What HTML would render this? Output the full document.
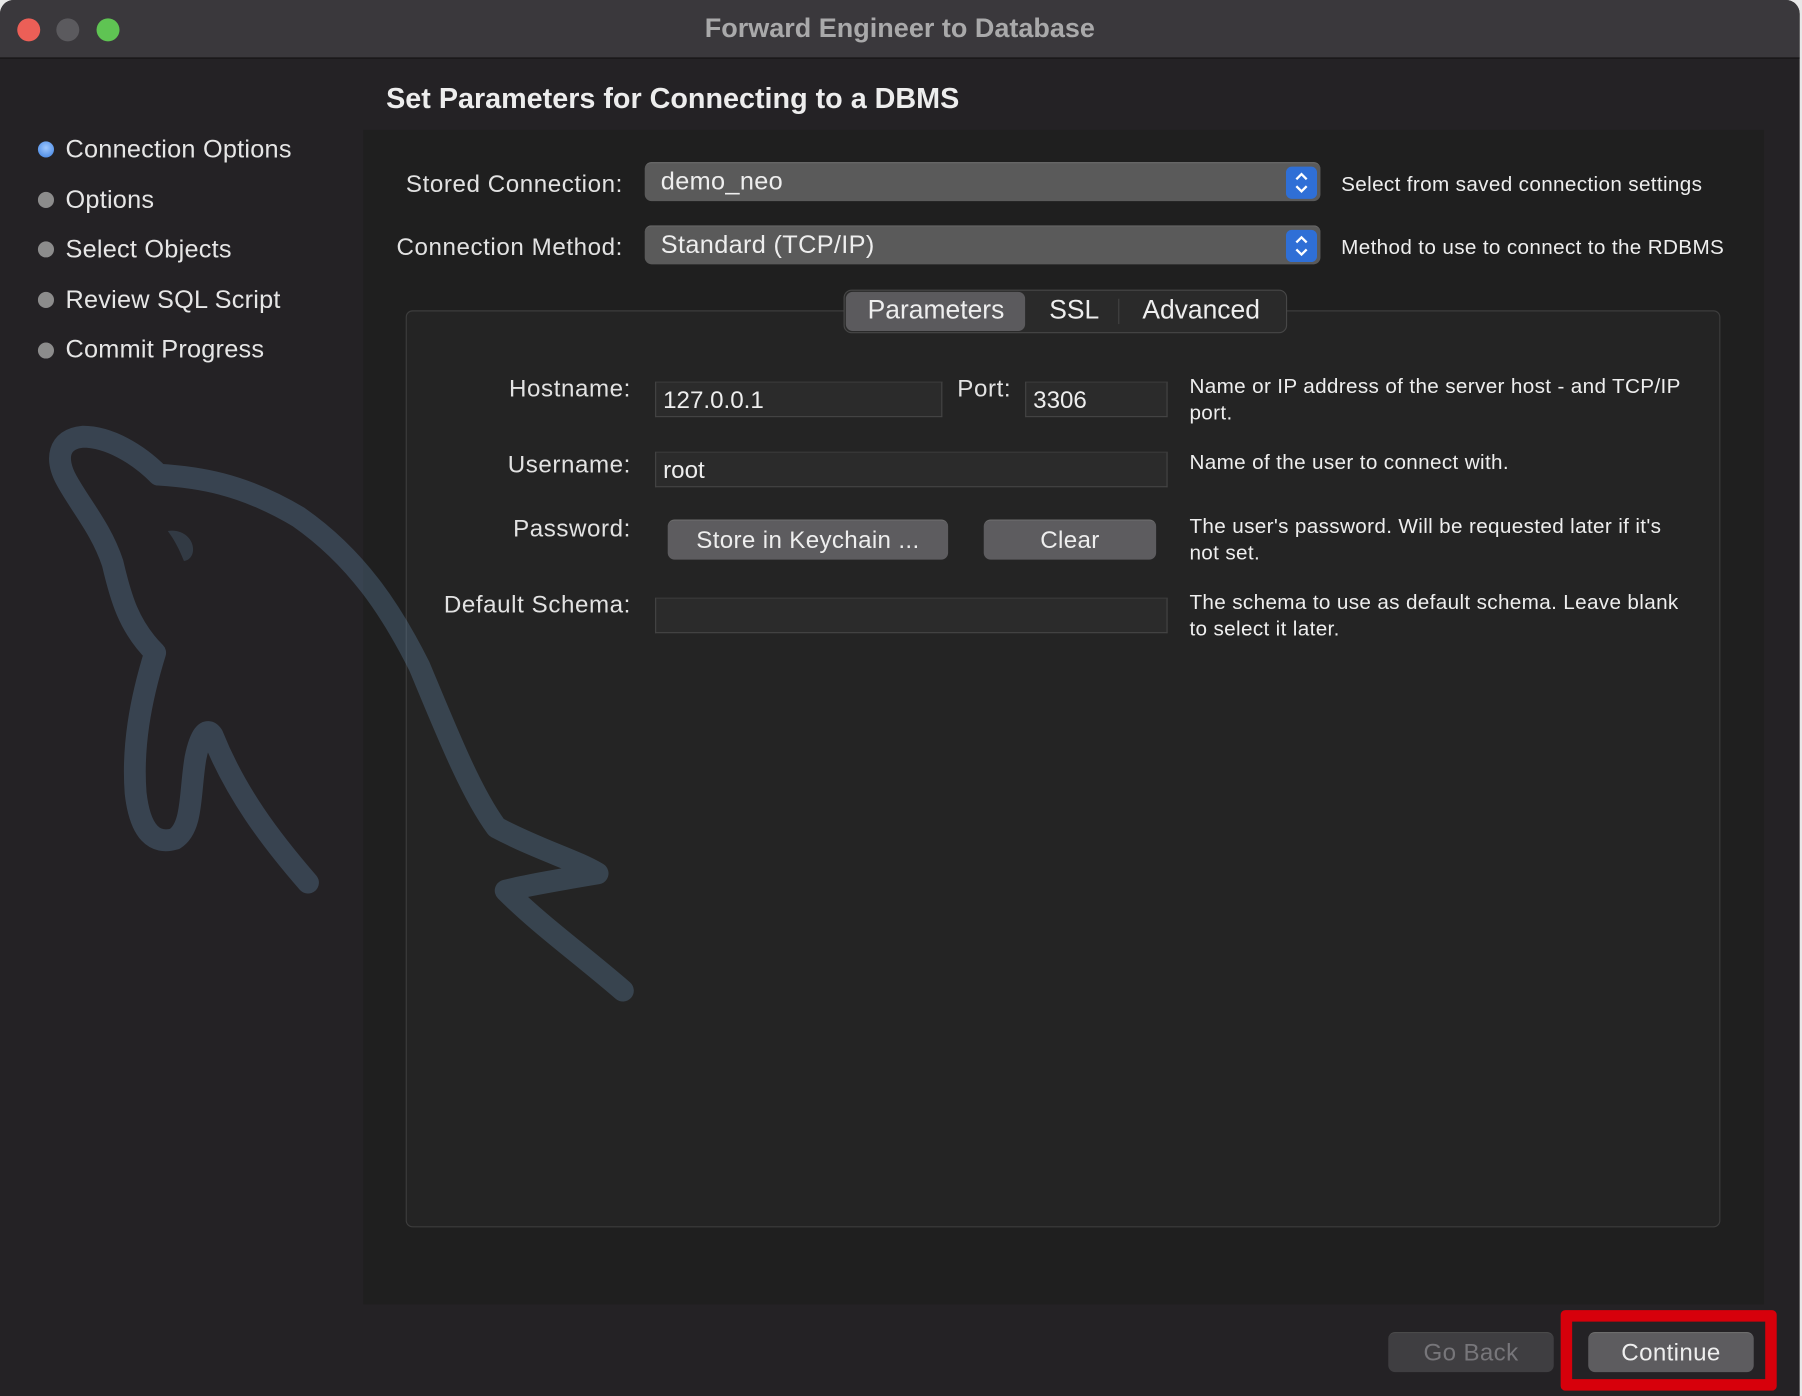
<!DOCTYPE html>
<html><head><meta charset="utf-8"><style>
html,body{margin:0;padding:0;background:#e8e8e8;overflow:hidden}
body{width:1802px;height:1396px}
#w{position:absolute;left:0;top:0;width:1568px;height:1215px;transform:scale(1.14923);transform-origin:0 0;font-family:"Liberation Sans",sans-serif}
.win{position:absolute;left:0;top:0;width:1566px;height:1215px;background:#242225;border-radius:12px 12px 0 0;overflow:hidden}
.title{position:absolute;left:0;top:0;width:100%;height:50px;background:#3a383c;border-bottom:1px solid #111}
.tl{position:absolute;top:16px;width:20px;height:20px;border-radius:50%}
.abs{position:absolute;white-space:nowrap}
.lbl{color:#e2e2e2;font-size:21px;letter-spacing:0.5px}
.side{color:#e6e6e6;font-size:22px;letter-spacing:0.2px}
.dot{position:absolute;width:14px;height:14px;border-radius:50%;background:#8c8c8c}
.help{color:#eee;font-size:18px;line-height:23px;letter-spacing:0.3px}
.sel{position:absolute;height:34px;background:#5a5a5a;border-radius:6px;color:#eee;font-size:22px;line-height:32px;padding-left:14px;box-sizing:border-box;border-top:1px solid #6a6a6a;letter-spacing:0.3px}
.step{position:absolute;right:3px;top:3px;width:27px;height:28px;background:#2f6fd6;border-radius:5px}
.inp{position:absolute;height:31px;background:#2b2b2b;border:1px solid #444;border-top-color:#3a3a3a;box-sizing:border-box;color:#eee;font-size:21px;line-height:32px;padding-left:6px}
.btn{position:absolute;height:35px;background:#5d5c5f;border-radius:6px;color:#eee;font-size:21px;text-align:center;line-height:35px;border-top:1px solid #6d6d6d;box-sizing:border-box;letter-spacing:0.3px}
</style></head><body><div id="w"><div class="win">
<div class="title">
<div class="tl" style="left:15px;background:#ec5f57"></div>
<div class="tl" style="left:49px;background:#5b5a5e"></div>
<div class="tl" style="left:84px;background:#5fc453"></div>
<div class="abs" style="left:0;width:1566px;text-align:center;top:11px;color:#a9a9aa;font-size:23.5px;font-weight:bold">Forward Engineer to Database</div>
</div>
<div class="abs" style="left:336px;top:72px;color:#ededed;font-size:25px;font-weight:bold">Set Parameters for Connecting to a DBMS</div>
<div class="abs" style="left:316px;top:113px;width:1219px;height:1022px;background:#1f1f1f"></div>
<div class="dot" style="left:33px;top:123px;background:radial-gradient(circle at 50% 40%,#9fc8ff,#3b7fe0)"></div>
<div class="abs side" style="left:57px;top:117px">Connection Options</div>
<div class="dot" style="left:33px;top:167px"></div><div class="abs side" style="left:57px;top:161px">Options</div>
<div class="dot" style="left:33px;top:210px"></div><div class="abs side" style="left:57px;top:204px">Select Objects</div>
<div class="dot" style="left:33px;top:254px"></div><div class="abs side" style="left:57px;top:248px">Review SQL Script</div>
<div class="dot" style="left:33px;top:298px"></div><div class="abs side" style="left:57px;top:291px">Commit Progress</div>

<div class="abs lbl" style="right:1024px;top:149px">Stored Connection:</div>
<div class="sel" style="left:561px;top:141px;width:588px">demo_neo<div class="step"><svg width="27" height="28"><path d="M9 11 L13.5 6.5 L18 11 M9 17 L13.5 21.5 L18 17" fill="none" stroke="#fff" stroke-width="2"/></svg></div></div>
<div class="abs help" style="left:1167px;top:149px">Select from saved connection settings</div>
<div class="abs lbl" style="right:1024px;top:204px">Connection Method:</div>
<div class="sel" style="left:561px;top:196px;width:588px">Standard (TCP/IP)<div class="step"><svg width="27" height="28"><path d="M9 11 L13.5 6.5 L18 11 M9 17 L13.5 21.5 L18 17" fill="none" stroke="#fff" stroke-width="2"/></svg></div></div>
<div class="abs help" style="left:1167px;top:204px">Method to use to connect to the RDBMS</div>

<div class="abs" style="left:353px;top:270px;width:1144px;height:798px;background:#242424;border:1px solid #3d3d3d;border-radius:6px;box-sizing:border-box"></div>
<div class="abs" style="left:734px;top:252px;width:386px;height:38px;background:#2a2a2a;border:1px solid #474747;border-radius:7px;box-sizing:border-box"></div>
<div class="abs" style="left:736px;top:254px;width:156px;height:34px;background:#5b5a5d;border-radius:6px"></div>
<div class="abs" style="left:973px;top:260px;width:1px;height:22px;background:#444"></div>
<div class="abs" style="left:755px;top:256px;color:#eee;font-size:23px">Parameters</div>
<div class="abs" style="left:913px;top:256px;color:#eee;font-size:23px">SSL</div>
<div class="abs" style="left:994px;top:256px;color:#eee;font-size:23px">Advanced</div>

<div class="abs lbl" style="right:1017px;top:327px">Hostname:</div>
<div class="inp" style="left:570px;top:332px;width:250px">127.0.0.1</div>
<div class="abs lbl" style="left:833px;top:327px">Port:</div>
<div class="inp" style="left:892px;top:332px;width:124px">3306</div>
<div class="abs help" style="left:1035px;top:325px">Name or IP address of the server host - and TCP/IP<br>port.</div>
<div class="abs lbl" style="right:1017px;top:393px">Username:</div>
<div class="inp" style="left:570px;top:393px;width:446px">root</div>
<div class="abs help" style="left:1035px;top:391px">Name of the user to connect with.</div>
<div class="abs lbl" style="right:1017px;top:449px">Password:</div>
<div class="btn" style="left:581px;top:452px;width:244px">Store in Keychain ...</div>
<div class="btn" style="left:856px;top:452px;width:150px">Clear</div>
<div class="abs help" style="left:1035px;top:447px">The user's password. Will be requested later if it's<br>not set.</div>
<div class="abs lbl" style="right:1017px;top:515px">Default Schema:</div>
<div class="inp" style="left:570px;top:520px;width:446px"></div>
<div class="abs help" style="left:1035px;top:513px">The schema to use as default schema. Leave blank<br>to select it later.</div>

<svg class="abs" style="left:0;top:0;opacity:0.38" width="1568" height="1215">
<g fill="none" stroke="#5a7a96" stroke-width="19" stroke-linecap="round" stroke-linejoin="round">
<path d="M138 413 C120 395 95 380 72 380 C50 382 48 400 58 418 C70 440 88 460 98 490 C105 520 112 545 135 568 C122 610 115 650 118 690 C122 725 135 735 152 730 C168 720 165 690 170 660 C174 640 180 632 185 640 C205 690 235 730 268 768"/>
<path d="M138 413 C170 415 210 420 260 450 C310 485 340 530 365 580 C390 640 410 690 432 720 C470 740 500 748 520 760 C490 765 460 770 440 775 C470 805 505 830 542 862"/>
</g>
<path d="M146 462 C158 460 168 468 168 478 C168 484 164 488 160 488 C156 478 152 470 146 462Z" fill="#4a6278"/>
</svg>

<div class="btn" style="left:1208px;top:1159px;width:144px;background:#3f3e41;color:#77767a;border-top-color:#4a4a4a">Go Back</div>
<div class="abs" style="left:1358px;top:1140px;width:188px;height:70px;border:10px solid #d7000b;border-radius:4px;box-sizing:border-box"></div>
<div class="btn" style="left:1382px;top:1159px;width:144px">Continue</div>
</div></div></body></html>
